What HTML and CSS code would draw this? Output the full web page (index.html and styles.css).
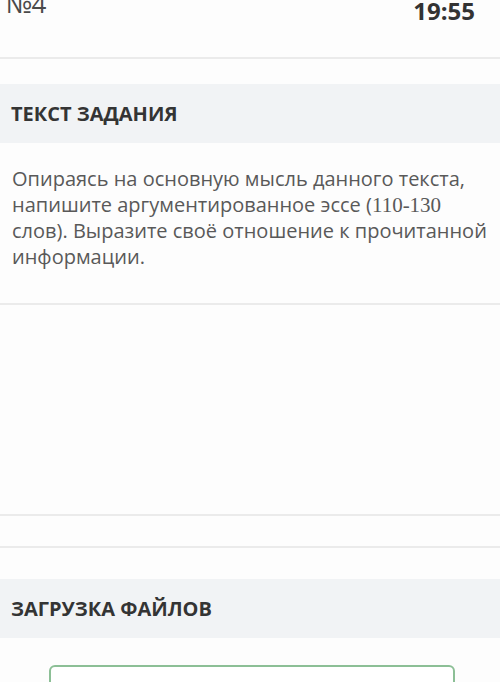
FILE: index.html
```html
<!DOCTYPE html>
<html lang="ru">
<head>
    <meta charset="UTF-8">
    <meta name="viewport" content="width=device-width, initial-scale=1.0">
    <title>Задание №4</title>
    <link rel="stylesheet" href="styles.css">
</head>
<body>
    <header class="task-header">
        <span class="task-number">№4</span>
        <span class="task-timer">19:55</span>
    </header>

    <section class="task-section">
        <h2 class="section-title">ТЕКСТ ЗАДАНИЯ</h2>
        <p class="task-text">Опираясь на основную мысль данного текста, напишите аргументированное эссе (<span class="num">110-130</span> слов). Выразите своё отношение к прочитанной информации.</p>
    </section>

    <div class="answer-area"></div>
    <div class="answer-footer"></div>

    <section class="upload-section">
        <h2 class="section-title">ЗАГРУЗКА ФАЙЛОВ</h2>
        <div class="upload-box"></div>
    </section>
</body>
</html>
```

FILE: styles.css
```css
* {
    margin: 0;
    padding: 0;
    box-sizing: border-box;
}

body {
    font-family: 'Open Sans', 'Noto Sans', sans-serif;
    background: #fdfdfd;
    color: #555555;
    overflow: hidden;
    height: 682px;
}

.task-header {
    display: flex;
    justify-content: space-between;
    align-items: flex-start;
    height: 59px;
    padding: 0 25px 0 6px;
    border-bottom: 2px solid #ebebeb;
}

.task-number {
    font-size: 26px;
    line-height: 26px;
    margin-top: -10px;
    letter-spacing: -1px;
    color: #4a4a4a;
}

.task-timer {
    font-size: 24px;
    line-height: 24px;
    font-weight: 700;
    margin-top: -1px;
    color: #333333;
}

.task-section {
    margin-top: 25px;
    border-bottom: 2px solid #ebebeb;
}

.section-title {
    display: flex;
    align-items: center;
    height: 59px;
    padding: 0 11px;
    background: #f1f3f5;
    font-size: 20px;
    font-weight: 700;
    color: #343434;
}

.task-text {
    padding: 23px 12px 33px;
    font-size: 20px;
    line-height: 26px;
    color: #595959;
}

.task-text .num {
    font-family: 'Liberation Serif', serif;
    font-size: 21px;
}

.answer-area {
    height: 211px;
    border-bottom: 2px solid #ebebeb;
}

.answer-footer {
    height: 32px;
    border-bottom: 2px solid #ebebeb;
}

.upload-section {
    margin-top: 31px;
}

.upload-box {
    margin: 27px 0 0 49px;
    width: 406px;
    height: 60px;
    border: 2px solid #8cbf96;
    border-radius: 6px;
    background: #ffffff;
}
```
